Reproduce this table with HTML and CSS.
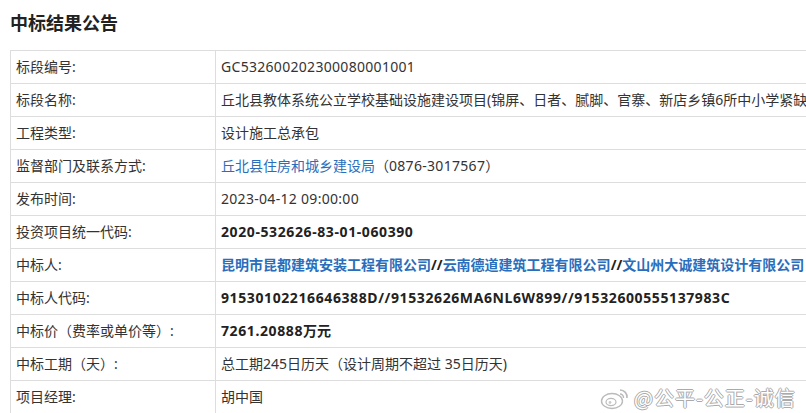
FILE: index.html
```html
<!DOCTYPE html>
<html lang="zh-CN">
<head>
  <meta charset="UTF-8">
  <title>中标结果公告</title>
  <link rel="stylesheet" href="styles.css">
</head>
<body>

  <h1 class="page-title">中标结果公告</h1>

  <table class="result-table">
    <tr><td class="label">标段编号:</td><td class="latin">GC532600202300080001001</td></tr>
    <tr><td class="label">标段名称:</td><td>丘北县教体系统公立学校基础设施建设项目(锦屏、日者、腻脚、官寨、新店乡镇6所中小学紧缺</td></tr>
    <tr><td class="label">工程类型:</td><td>设计施工总承包</td></tr>
    <tr><td class="label">监督部门及联系方式:</td><td><a class="link">丘北县住房和城乡建设局</a>（<span class="latin">0876-3017567</span>）</td></tr>
    <tr><td class="label">发布时间:</td><td class="latin">2023-04-12 09:00:00</td></tr>
    <tr><td class="label">投资项目统一代码:</td><td class="strong latin">2020-532626-83-01-060390</td></tr>
    <tr><td class="label">中标人:</td><td class="strong"><a class="link">昆明市昆都建筑安装工程有限公司</a>//<a class="link">云南德道建筑工程有限公司</a>//<a class="link">文山州大诚建筑设计有限公司</a></td></tr>
    <tr><td class="label">中标人代码:</td><td class="strong latin">91530102216646388D//91532626MA6NL6W899//91532600555137983C</td></tr>
    <tr><td class="label">中标价（费率或单价等）:</td><td class="strong"><span class="latin">7261.20888</span>万元</td></tr>
    <tr><td class="label">中标工期（天）:</td><td>总工期245日历天（设计周期不超过 35日历天)</td></tr>
    <tr><td class="label">项目经理:</td><td>胡中国</td></tr>
  </table>

  <div class="watermark">
    <svg class="wm-logo" width="30" height="24" viewBox="0 0 30 24">
      <ellipse cx="12" cy="15" rx="10.5" ry="7.5" fill="#fff" stroke="#bbb" stroke-width="1.4"/>
      <ellipse cx="11" cy="16" rx="5" ry="3.6" fill="#fff" stroke="#bbb" stroke-width="1.2"/>
      <circle cx="10" cy="16.5" r="1.4" fill="#ccc"/>
      <path d="M20 4 a7 7 0 0 1 7 8" fill="none" stroke="#bbb" stroke-width="1.6"/>
      <path d="M20 8 a3.5 3.5 0 0 1 3.5 4" fill="none" stroke="#bbb" stroke-width="1.4"/>
    </svg>
    <span class="wm-text">@公平-公正-诚信</span>
  </div>

</body>
</html>
```

FILE: styles.css
```css
body {
  margin: 0;
  padding: 0 0 0 10px;
  font-family: "Noto Sans", "Noto Sans CJK SC", sans-serif;
  color: #333;
  background: #fff;
  overflow: hidden;
  width: 1000px;
  height: 413px;
  position: relative;
}
.page-title {
  font-family: "Noto Sans CJK SC", sans-serif;
  font-size: 18px;
  font-weight: bold;
  margin: 0;
  height: 50px;
  line-height: 44px;
  color: #222;
}
.result-table {
  border-collapse: collapse;
  width: 980px;
  font-size: 14px;
}
.result-table td {
  border: 1px solid #ddd;
  height: 32px;
  padding: 0 5px;
  white-space: nowrap;
  line-height: 20px;
}
.result-table td.label {
  width: 194px;
}
.latin {
  letter-spacing: 0.3px;
}
.strong {
  font-weight: bold;
  color: #222;
}
.strong.latin,
.strong .latin {
  letter-spacing: 0.6px;
}
.link {
  color: #2a6ebb;
  text-decoration: none;
}
.watermark {
  position: absolute;
  left: 600px;
  top: 383px;
  display: flex;
  align-items: center;
  gap: 4px;
}
.wm-text {
  font-family: "Noto Sans CJK SC", sans-serif;
  font-size: 20px;
  color: #fff;
  letter-spacing: 1px;
  text-shadow: -1px 0 #aaa, 1px 0 #aaa, 0 -1px #aaa, 0 1px #aaa;
}
```
